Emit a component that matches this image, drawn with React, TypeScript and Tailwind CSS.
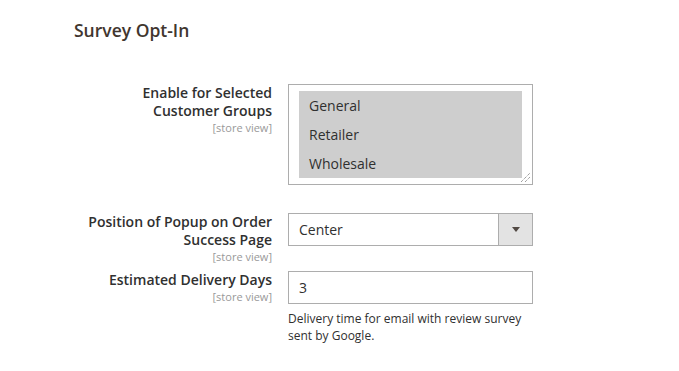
import React from 'react';

const groups = ['General', 'Retailer', 'Wholesale'];

const Label = ({ lines, scope }: { lines: string[]; scope: string }) => (
  <div className="w-[190px] shrink-0 text-right">
    {lines.map((line) => (
      <div key={line} className="text-[14px] leading-[18px] font-semibold text-[#303030]">
        {line}
      </div>
    ))}
    <div className="text-[11px] leading-[16px] text-[#999999]">{scope}</div>
  </div>
);

const App = () => {
  return (
    <div
      className="w-[679px] h-[371px] bg-white overflow-hidden"
      style={{ fontFamily: '"Open Sans", "Noto Sans", sans-serif' }}
    >
      <div className="pl-[74px] pt-[20px]">
        <h2 className="text-[17.5px] leading-[20px] font-semibold text-[#41362f]">Survey Opt-In</h2>
      </div>

      <div className="pl-[82px] pt-[44px]">
        {/* customer groups */}
        <div className="flex items-start gap-[16px] mb-[28px]">
          <Label lines={['Enable for Selected', 'Customer Groups']} scope="[store view]" />
          <div className="relative w-[245px] h-[101px] border border-[#adadad] bg-white px-[10px] pt-[6px]">
            <div className="bg-[#cecece]">
              {groups.map((g) => (
                <div key={g} className="h-[29px] leading-[29px] px-[10px] text-[14px] text-[#303030]">
                  {g}
                </div>
              ))}
            </div>
            <svg className="absolute right-[1px] bottom-[1px]" width="11" height="11" viewBox="0 0 11 11">
              <line x1="1" y1="10" x2="10" y2="1" stroke="#777" strokeWidth="1" strokeDasharray="1 1" />
              <line x1="5" y1="10" x2="10" y2="5" stroke="#777" strokeWidth="1" strokeDasharray="1 1" />
            </svg>
          </div>
        </div>

        {/* popup position */}
        <div className="flex items-start gap-[16px] mb-[6px]">
          <Label lines={['Position of Popup on Order', 'Success Page']} scope="[store view]" />
          <div className="flex w-[245px] h-[33px] border border-[#adadad] bg-white">
            <div className="flex-1 pl-[10px] leading-[31px] text-[14px] text-[#303030]">Center</div>
            <div className="w-[34px] flex items-center justify-center bg-[#e3e3e3] border-l border-[#adadad]">
              <svg width="8" height="5" viewBox="0 0 8 5">
                <path d="M0 0h8L4 5z" fill="#514943" />
              </svg>
            </div>
          </div>
        </div>

        {/* delivery days */}
        <div className="flex items-start gap-[16px]">
          <Label lines={['Estimated Delivery Days']} scope="[store view]" />
          <div className="w-[245px]">
            <div className="h-[33px] border border-[#adadad] bg-white pl-[10px] leading-[31px] text-[14px] text-[#303030]">
              3
            </div>
            <p className="mt-[6px] text-[12px] leading-[17px] text-[#303030]">
              Delivery time for email with review survey sent by Google.
            </p>
          </div>
        </div>
      </div>
    </div>
  );
};

export default App;
